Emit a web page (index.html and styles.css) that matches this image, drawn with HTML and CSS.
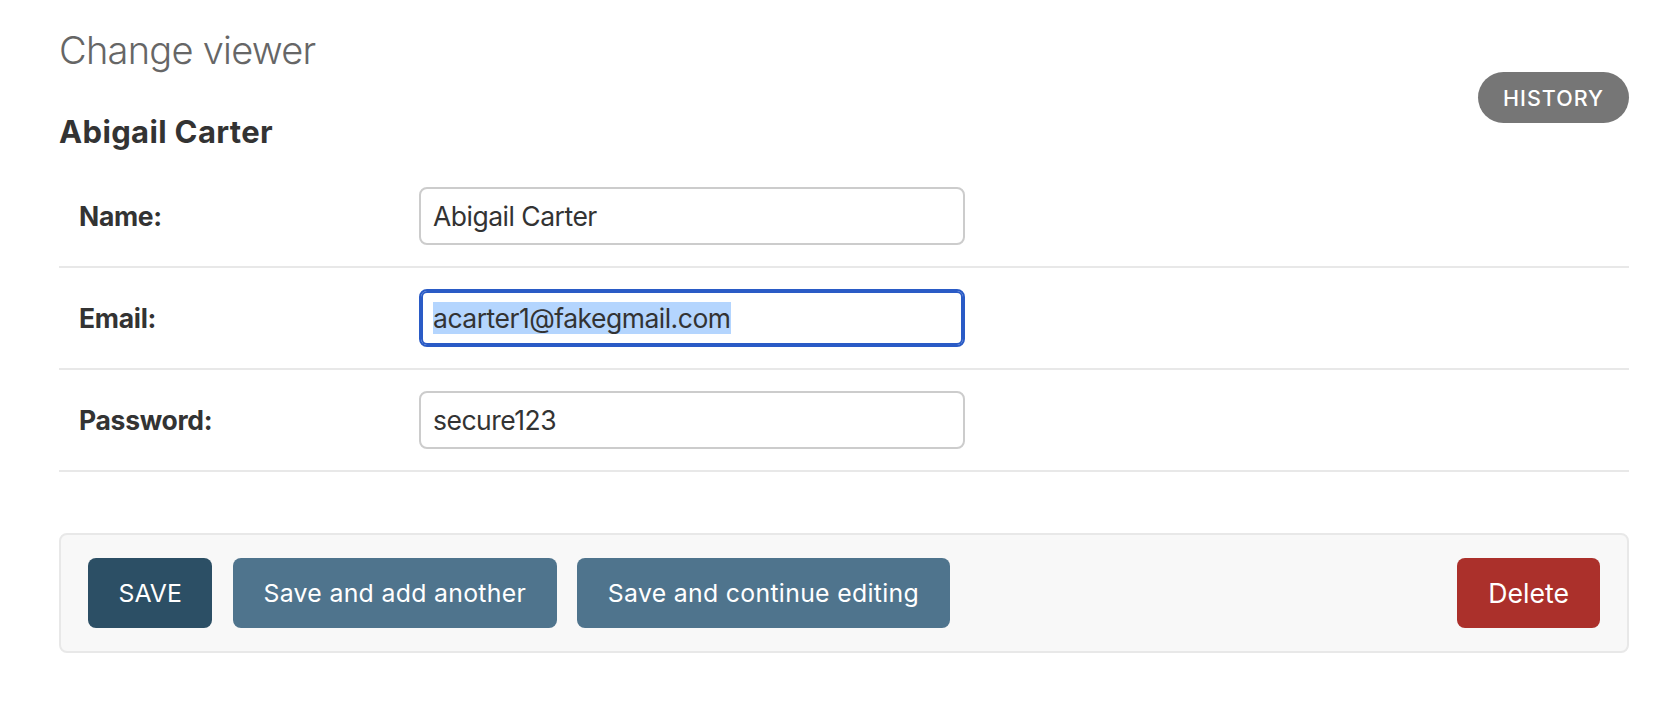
FILE: index.html
```html
<!DOCTYPE html>
<html lang="en">
<head>
<meta charset="utf-8">
<title>Change viewer</title>
<link rel="stylesheet" href="styles.css">
</head>
<body>
<div class="page">
  <header class="page-head">
    <h1 class="title">Change viewer</h1>
    <div class="subtitle-row">
      <h2 class="subtitle">Abigail Carter</h2>
      <a class="history-btn" href="#">History</a>
    </div>
  </header>
  <form class="change-form">
    <fieldset class="fields">
      <div class="form-row">
        <label class="field-label">Name:</label>
        <div class="text-input">Abigail Carter</div>
      </div>
      <div class="form-row">
        <label class="field-label">Email:</label>
        <div class="text-input is-focused"><span class="selected-text">acarter1@fakegmail.com</span></div>
      </div>
      <div class="form-row">
        <label class="field-label">Password:</label>
        <div class="text-input">secure123</div>
      </div>
    </fieldset>
    <div class="submit-row">
      <button type="button" class="btn btn-default">SAVE</button>
      <button type="button" class="btn">Save and add another</button>
      <button type="button" class="btn">Save and continue editing</button>
      <a class="btn btn-delete" href="#">Delete</a>
    </div>
  </form>
</div>
</body>
</html>
```
FILE: styles.css
```css
* {
  box-sizing: border-box;
}

html, body {
  margin: 0;
  background: #ffffff;
}

body {
  font-family: "Inter", "Liberation Sans", sans-serif;
  color: #333333;
}

.page {
  padding: 27px 51px 0 59px;
}

.title {
  margin: 0;
  font-size: 38px;
  line-height: 46px;
  font-weight: 300;
  color: #666666;
  letter-spacing: -0.75px;
}

.subtitle-row {
  display: flex;
  justify-content: space-between;
  align-items: flex-start;
  margin-bottom: 16px;
}

.subtitle {
  margin: 41px 0 0;
  font-size: 31px;
  line-height: 36px;
  font-weight: 700;
  color: #333333;
  letter-spacing: 0.35px;
}

.history-btn {
  display: flex;
  align-items: center;
  height: 51px;
  margin-top: -1px;
  padding: 0 25px;
  border-radius: 26px;
  background: #767676;
  color: #ffffff;
  font-size: 21.5px;
  font-weight: 500;
  letter-spacing: 1px;
  text-transform: uppercase;
  text-decoration: none;
}

.change-form {
  margin: 0;
}

.fields {
  margin: 0;
  padding: 0;
  border: 0;
  min-width: 0;
}

.form-row {
  display: flex;
  align-items: baseline;
  padding: 21px 0 21px 20px;
  border-bottom: 2px solid #e8e8e8;
}

.field-label {
  flex: none;
  width: 340px;
  font-size: 26.5px;
  font-weight: 700;
  color: #333333;
  letter-spacing: -0.3px;
}

.text-input {
  flex: none;
  width: 546px;
  height: 58px;
  padding: 0 12px;
  border: 2px solid #cccccc;
  border-radius: 8px;
  background: #ffffff;
  font-size: 26.5px;
  line-height: 54px;
  color: #333333;
  letter-spacing: -0.5px;
  white-space: nowrap;
}

.text-input.is-focused {
  border-color: #2a5bc6;
  box-shadow: inset 0 0 0 2px #2a5bc6;
}

.selected-text {
  background: #b4d5fe;
}

.submit-row {
  display: flex;
  align-items: center;
  gap: 20.6px;
  margin-top: 61px;
  padding: 23px 27px;
  border: 2px solid #e8e8e8;
  border-radius: 8px;
  background: #f8f8f8;
}

.btn {
  display: flex;
  align-items: center;
  height: 70px;
  padding: 0 30.5px;
  border: 0;
  border-radius: 8px;
  background: #4f748d;
  color: #ffffff;
  font-family: inherit;
  font-size: 24.8px;
  font-weight: 400;
  letter-spacing: 0.32px;
  text-decoration: none;
  cursor: pointer;
}

.btn-default {
  background: #2c4f65;
  letter-spacing: 0;
}

.btn-delete {
  margin-left: auto;
  padding: 0 31px;
  background: #ab302b;
  font-size: 26.7px;
  letter-spacing: 0;
}
```
